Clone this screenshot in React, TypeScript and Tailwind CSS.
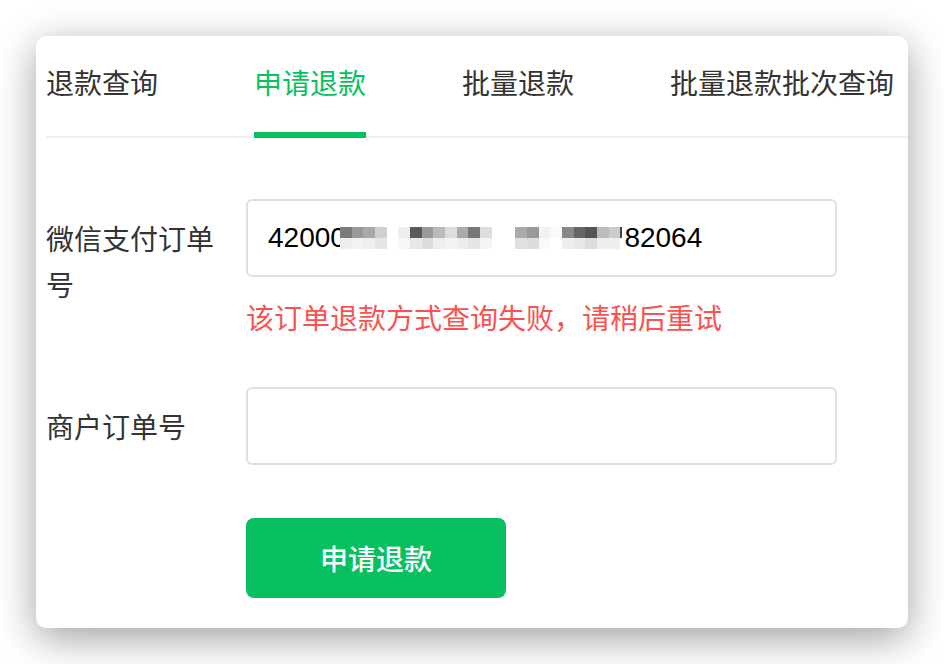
const CJK = "font-['PingFang_SC','Noto_Sans_CJK_SC',sans-serif]"

const TABS = ['退款查询', '申请退款', '批量退款', '批量退款批次查询']

// mosaic over the masked part of the order number: [top, bottom]
const MOSAIC: [string, string][] = [
  ['bg-[#7a7a7a]', 'bg-[#eeeeee]'],
  ['bg-[#999999]', 'bg-[#f3f3f3]'],
  ['bg-[#a8a8a8]', 'bg-[#eeeeee]'],
  ['bg-[#d0d0d0]', 'bg-[#e6e6e6]'],
  ['bg-white', 'bg-white'],
  ['bg-[#eeeeee]', 'bg-[#f7f7f7]'],
  ['bg-[#5a5a5a]', 'bg-[#e8e8e8]'],
  ['bg-[#9a9a9a]', 'bg-[#dddddd]'],
  ['bg-[#bbbbbb]', 'bg-[#eeeeee]'],
  ['bg-[#dddddd]', 'bg-[#f3f3f3]'],
  ['bg-[#aaaaaa]', 'bg-[#eeeeee]'],
  ['bg-[#777777]', 'bg-[#e6e6e6]'],
  ['bg-[#dddddd]', 'bg-[#f5f5f5]'],
  ['bg-white', 'bg-white'],
  ['bg-white', 'bg-white'],
  ['bg-[#aaaaaa]', 'bg-[#e0e0e0]'],
  ['bg-[#999999]', 'bg-[#dddddd]'],
  ['bg-[#f2f2f2]', 'bg-[#fafafa]'],
  ['bg-[#fafafa]', 'bg-white'],
  ['bg-[#888888]', 'bg-[#eeeeee]'],
  ['bg-[#666666]', 'bg-[#e8e8e8]'],
  ['bg-[#555555]', 'bg-[#dddddd]'],
  ['bg-[#bbbbbb]', 'bg-[#eeeeee]'],
  ['bg-[#cccccc]', 'bg-[#eeeeee]'],
]

function Mosaic() {
  return (
    <span className="-ml-[6px] mr-[2px] inline-flex h-[22px] align-[-3px] blur-[0.6px]">
      {MOSAIC.map(([top, bottom], i) => (
        <span key={i} className="flex w-[11.7px] flex-col">
          <span className={`h-[11px] ${top}`} />
          <span className={`h-[11px] ${bottom}`} />
        </span>
      ))}
      <span className="h-[11px] w-[2px] bg-[#444444]" />
    </span>
  )
}

export default function App() {
  return (
    <div className="h-[664px] w-[944px] bg-white pl-[36px] pt-[36px]">
      <div
        className={`h-[592px] w-[872px] overflow-hidden rounded-[10px] bg-white shadow-[0_10px_40px_rgba(0,0,0,0.38)] ${CJK}`}
      >
        <div className="ml-[10px] flex gap-[96px] border-b-2 border-[#eeeeee]">
          {TABS.map((t, i) => (
            <div key={t} className="relative pb-[32px] pt-[24px]">
              <span
                className={`text-[28px] leading-[44px] ${i === 1 ? 'text-[#07c160]' : 'text-[#333333]'}`}
              >
                {t}
              </span>
              {i === 1 && (
                <span className="absolute -bottom-[2px] left-0 right-0 h-[6px] bg-[#07c160]" />
              )}
            </div>
          ))}
        </div>

        <div className="ml-[10px] pt-[61px]">
          <div className="flex items-start">
            <label className="w-[200px] pr-[20px] pt-[16px] text-[28px] leading-[46px] text-[#333333]">
              微信支付订单号
            </label>
            <div>
              <div className="flex h-[78px] w-[591px] items-center rounded-[6px] border-2 border-[#e0e0e0] pl-[20px] font-['Liberation_Sans',Arial,sans-serif] text-[28px] text-black">
                <span>42000</span>
                <Mosaic />
                <span>82064</span>
              </div>
              <p className="mt-[17px] text-[28px] leading-[46px] text-[#fa5151]">
                该订单退款方式查询失败，请稍后重试
              </p>
            </div>
          </div>

          <div className="mt-[47px] flex items-start">
            <label className="w-[200px] pr-[20px] pt-[16px] text-[28px] leading-[46px] text-[#333333]">
              商户订单号
            </label>
            <div className="h-[78px] w-[591px] rounded-[6px] border-2 border-[#e0e0e0]" />
          </div>

          <div className="ml-[200px] mt-[53px]">
            <button className="flex h-[80px] w-[260px] items-center justify-center rounded-[8px] bg-[#07c160] text-[28px] font-medium text-white">
              申请退款
            </button>
          </div>
        </div>
      </div>
    </div>
  )
}
